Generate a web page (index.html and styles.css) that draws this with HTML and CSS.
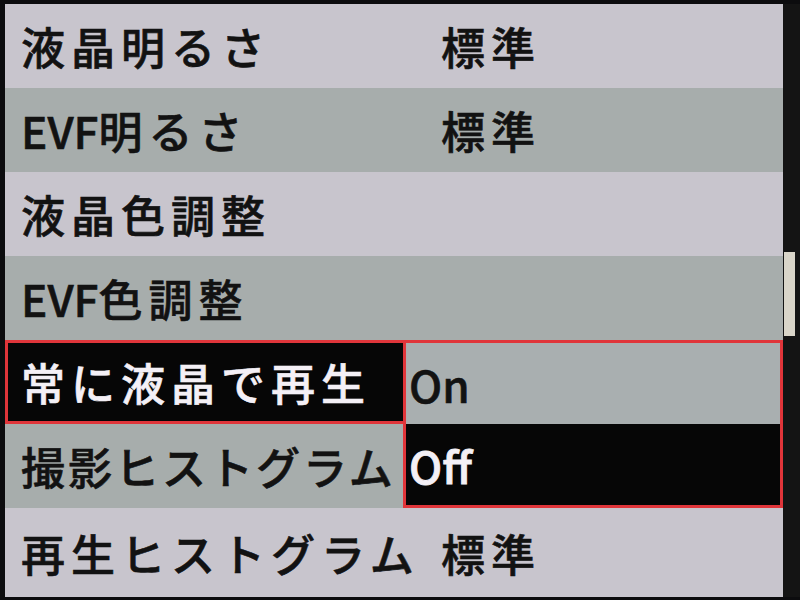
FILE: index.html
```html
<!DOCTYPE html>
<html lang="ja">
<head>
<meta charset="utf-8">
<title>メニュー</title>
<link rel="stylesheet" href="styles.css">
</head>
<body>
<div class="screen">
  <div class="menu">
    <div class="row light"><span class="label">液晶明るさ</span><span class="value">標準</span></div>
    <div class="row dark"><span class="label"><span class="latin">EVF</span>明るさ</span><span class="value">標準</span></div>
    <div class="row light"><span class="label">液晶色調整</span></div>
    <div class="row dark"><span class="label"><span class="latin">EVF</span>色調整</span></div>
    <div class="row light current"><span class="label selected">常に液晶で再生</span></div>
    <div class="row dark"><span class="label tight">撮影ヒストグラム</span></div>
    <div class="row light last"><span class="label">再生ヒストグラム</span><span class="value">標準</span></div>
    <div class="popup">
      <div class="opt">On</div>
      <div class="opt active">Off</div>
    </div>
  </div>
  <div class="scrollbar"><div class="thumb"></div></div>
</div>
</body>
</html>
```

FILE: styles.css
```css
html, body {
  margin: 0;
  padding: 0;
  background: #0c0c0e;
}
body {
  width: 800px;
  height: 600px;
  overflow: hidden;
  font-family: "Noto Sans CJK JP", "Noto Sans", sans-serif;
}
.screen {
  display: flex;
  width: 800px;
  height: 600px;
  box-sizing: border-box;
  padding: 4px 0 3px 5px;
}
.menu {
  position: relative;
  flex: 1;
  display: flex;
  flex-direction: column;
}
.row {
  height: 84px;
  flex: none;
  display: grid;
  grid-template-columns: 420px 1fr;
  align-items: center;
  padding-left: 16px;
  box-sizing: border-box;
  font-size: 44px;
  font-weight: 500;
  color: #121212;
  letter-spacing: 6px;
  line-height: 1;
  -webkit-text-stroke: 0.6px #121212;
}
.row.last {
  flex: 1;
}
.light { background: #c8c5cd; }
.dark { background: #a7adac; }
.label { white-space: nowrap; }
.label.tight {
  letter-spacing: 3px;
}
.latin { letter-spacing: 0; }
.value { white-space: nowrap; }
.row.current {
  padding-left: 0;
  display: flex;
}
.selected {
  box-sizing: border-box;
  width: 402px;
  height: 84px;
  display: flex;
  align-items: center;
  padding-left: 13px;
  background: #060606;
  border: 3px solid #e0353a;
  color: #f4f0f6;
  -webkit-text-stroke: 0.6px #f4f0f6;
}
.popup {
  position: absolute;
  left: 398px;
  top: 336px;
  width: 380px;
  height: 168px;
  box-sizing: border-box;
  border: 3px solid #e0353a;
  display: flex;
  flex-direction: column;
}
.opt {
  flex: 1;
  display: flex;
  align-items: center;
  padding-left: 3px;
  font-size: 44px;
  font-weight: 500;
  line-height: 1;
  background: #a9afb0;
  color: #121212;
  -webkit-text-stroke: 0.6px #121212;
}
.opt.active {
  background: #060606;
  color: #f4f0f6;
  -webkit-text-stroke: 0.8px #f4f0f6;
}
.scrollbar {
  width: 17px;
  flex: none;
  background: #141414;
  padding-top: 248px;
  box-sizing: border-box;
}
.thumb {
  width: 11px;
  height: 84px;
  margin-left: 1px;
  background: #d9d5c9;
}
```
